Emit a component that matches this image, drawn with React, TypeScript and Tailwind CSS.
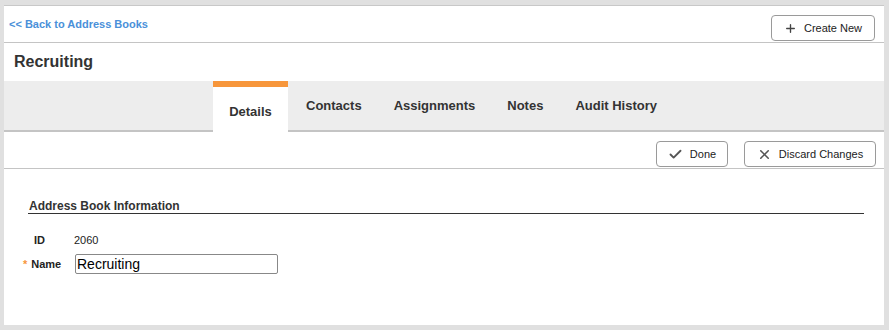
import { Check, Plus, X } from "lucide-react"

const tabs = ["Details", "Contacts", "Assignments", "Notes", "Audit History"]

export default function App() {
    return (
        <div className="w-[889px] h-[330px] bg-[#e0e0e0] pt-[5px] pl-[4px] font-['Liberation_Sans',Arial,sans-serif]">
            <div className="w-[880px] h-[320px] bg-white border-t border-[#c8c8c8] flex flex-col">
                {/*header*/}
                <div className="h-[37px] flex items-start justify-between border-b border-[#c4c4c4] pr-[9px]">
                    <a className="text-[11px] font-bold text-[#4a90d9] pl-[5px] pt-[13px] leading-none">&lt;&lt; Back to Address Books</a>
                    <button className="mt-[9px] h-[26px] w-[104px] border border-[#9a9a9a] rounded-[4px] flex items-center justify-center gap-[7px] text-[11px] text-[#222]">
                        <Plus size={13} strokeWidth={2.5} className="text-[#444]" />
                        Create New
                    </button>
                </div>
                <div className="h-[38px] text-[16px] font-bold text-[#333] pl-[10px] pt-[11px] leading-none">Recruiting</div>

                {/*tabs*/}
                <div className="h-[51px] bg-[#ededed] border-b-2 border-[#c4c4c4] flex pl-[209px]">
                    {tabs.map((t, i) =>
                        i == 0 ? (
                            <div key={t} className="w-[75px] h-[51px] bg-white border-t-[6px] border-[#f7963b] flex justify-center pt-[15px] text-[13px] font-bold text-[#333]">{t}</div>
                        ) : (
                            <div key={t} className={`px-[16px] pt-[15px] text-[13px] font-bold text-[#333] ${i == 1 ? "ml-[2px]" : ""}`}>{t}</div>
                        )
                    )}
                </div>

                {/*actions*/}
                <div className="h-[37px] flex justify-end items-start gap-[16px] pr-[8px] pt-[9px] border-b border-[#c4c4c4]">
                    <button className="h-[26px] w-[72px] border border-[#9a9a9a] rounded-[4px] flex items-center justify-center gap-[7px] text-[11px] text-[#222]">
                        <Check size={15} strokeWidth={3} className="text-[#555]" />
                        Done
                    </button>
                    <button className="h-[26px] w-[132px] border border-[#9a9a9a] rounded-[4px] flex items-center justify-center gap-[7px] text-[11px] text-[#222]">
                        <X size={15} strokeWidth={2.5} className="text-[#555]" />
                        Discard Changes
                    </button>
                </div>

                {/*form*/}
                <div className="pl-[24px] pr-[20px] pt-[30px]">
                    <div className="text-[12px] leading-[14px] font-bold text-[#333] border-b border-[#333] pl-[1px]">Address Book Information</div>
                    <div className="flex items-center mt-[19px] text-[11px] h-[14px]">
                        <div className="w-[46px] pl-[6px] font-bold text-[#222]">ID</div>
                        <div className="text-[#222]">2060</div>
                    </div>
                    <div className="flex items-center mt-[7px] text-[11px]">
                        <div className="w-[46px] flex gap-[4px] font-bold text-[#222] -ml-[5px]">
                            <span className="text-[#f7963b]">*</span>Name
                        </div>
                        <input defaultValue="Recruiting" className="ml-[6px] w-[203px] h-[20px] border border-[#888] rounded-[2px] px-[1px] text-[14px] text-black outline-none" />
                    </div>
                </div>
            </div>
        </div>
    )
}
